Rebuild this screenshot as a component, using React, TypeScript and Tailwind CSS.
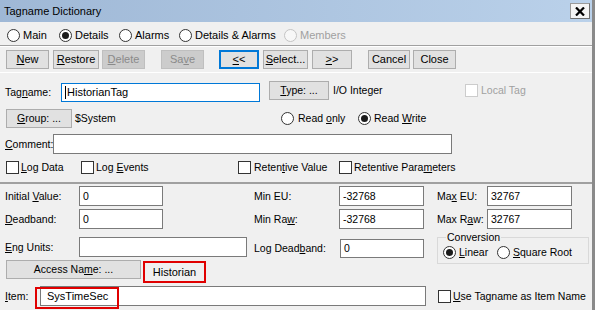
import React from 'react';

// Tagname Dictionary — classic Win32 dialog look

function U({ children }: { children: React.ReactNode }) {
  return <span className="underline underline-offset-[1px] decoration-1">{children}</span>;
}

function Btn({
  w,
  children,
  disabled,
  focused,
  h = 'h-[19px]',
}: {
  w: string;
  children: React.ReactNode;
  disabled?: boolean;
  focused?: boolean;
  h?: string;
}) {
  const look = disabled
    ? 'bg-[#cccccc] border border-[#bfbfbf] text-[#8a8a8a]'
    : focused
    ? 'bg-[#e1e1e1] border-2 border-[#0078d7]'
    : 'bg-[#e1e1e1] border border-[#adadad]';
  return (
    <div className={`${w} ${h} ${look} shrink-0 flex items-center justify-center`}>
      <span>{children}</span>
    </div>
  );
}

function Radio({ checked, disabled }: { checked?: boolean; disabled?: boolean }) {
  return (
    <span
      className={`w-[13px] h-[13px] rounded-full border shrink-0 flex items-center justify-center ${
        disabled ? 'border-[#c4c4c4] bg-[#f7f7f7]' : 'border-[#333333] bg-white'
      }`}
    >
      {checked && <span className="w-[7px] h-[7px] rounded-full bg-[#1b1b1b]" />}
    </span>
  );
}

function Check({ disabled }: { disabled?: boolean }) {
  return (
    <span
      className={`w-[13px] h-[13px] border shrink-0 bg-white ${disabled ? 'border-[#cccccc]' : 'border-[#333333]'}`}
    />
  );
}

function Field({ w, value, focused, h = 'h-[20px]', extra = '' }: { w: string; value?: string; focused?: boolean; h?: string; extra?: string }) {
  return (
    <div
      className={`${w} ${h} shrink-0 bg-white border ${
        focused ? 'border-[#0078d7]' : 'border-[#7a7a7a]'
      } flex items-center pl-[3px] ${extra}`}
    >
      {focused && <span className="w-px h-[13px] bg-black mr-px" />}
      <span>{value}</span>
    </div>
  );
}

export default function App() {
  return (
    <div className="w-[595px] h-[310px] overflow-hidden whitespace-nowrap bg-[#f0f0f0] border-r-[3px] border-[#8a8a8a] flex flex-col text-[10.5px] leading-none text-black font-['Liberation_Sans',Arial,sans-serif]">
      {/* title bar */}
      <div className="h-[22px] shrink-0 bg-linear-to-r from-[#9fb8d6] to-[#bad1ea] flex items-center justify-between pl-[4px] pr-[2px]">
        <span className="text-[11px]">Tagname Dictionary</span>
        <div className="w-[20px] h-[16px] bg-[#f4f4f4] border border-[#9a9a9a] border-r-[#6e6e6e] border-b-[#6e6e6e] flex items-center justify-center">
          <svg width="10" height="9" viewBox="0 0 10 9">
            <path d="M1 0.5 L9 8.5 M9 0.5 L1 8.5" stroke="#000" strokeWidth="2.2" />
          </svg>
        </div>
      </div>

      {/* view tabs */}
      <div className="h-[23px] shrink-0 flex items-center pt-[3px] pl-[7px] text-[11px]">
        <div className="w-[52px] flex items-center gap-[3px]"><Radio /><span>Main</span></div>
        <div className="w-[60px] flex items-center gap-[3px]"><Radio checked /><span>Details</span></div>
        <div className="w-[60px] flex items-center gap-[3px]"><Radio /><span>Alarms</span></div>
        <div className="w-[105px] flex items-center gap-[3px]"><Radio /><span>Details &amp; Alarms</span></div>
        <div className="flex items-center gap-[3px] text-[#a0a0a0]"><Radio disabled /><span>Members</span></div>
      </div>
      <div className="h-px shrink-0 bg-[#a0a0a0]" />
      <div className="h-px shrink-0 bg-white" />

      {/* toolbar */}
      <div className="h-[25px] shrink-0 flex items-start pt-[3px] pl-[6px] text-[11px]">
        <Btn w="w-[43px]"><U>N</U>ew</Btn>
        <div className="w-[4px]" />
        <Btn w="w-[46px]"><U>R</U>estore</Btn>
        <div className="w-[3px]" />
        <Btn w="w-[43px]" disabled><U>D</U>elete</Btn>
        <div className="w-[16px]" />
        <Btn w="w-[43px]" disabled>Sa<U>v</U>e</Btn>
        <div className="w-[15px]" />
        <Btn w="w-[40px]" focused><U>&lt;</U>&lt;</Btn>
        <div className="w-[4px]" />
        <Btn w="w-[45px]"><U>S</U>elect...</Btn>
        <div className="w-[4px]" />
        <Btn w="w-[40px]"><U>&gt;</U>&gt;</Btn>
        <div className="w-[16px]" />
        <Btn w="w-[42px]">Cancel</Btn>
        <div className="w-[3px]" />
        <Btn w="w-[43px]">Close</Btn>
      </div>
      <div className="h-px shrink-0 bg-white" />

      {/* general */}
      <div className="h-[8px] shrink-0" />
      <div className="h-[21px] shrink-0 flex items-start pl-[5px]">
        <span className="w-[56px] h-[21px] flex items-center pt-[2px]"><span>Tag<U>n</U>ame:</span></span>
        <Field w="w-[199px]" h="h-[19px]" extra="mt-[2px] text-[11px]" value="HistorianTag" focused />
        <div className="w-[9px]" />
        <Btn w="w-[60px]" h="h-[19px]"><U>T</U>ype: ...</Btn>
        <span className="w-[136px] h-[19px] flex items-center pl-[4px]">I/O Integer</span>
        <div className="h-[19px] flex items-center gap-[3px] text-[#a0a0a0]"><Check disabled /><span>Local Tag</span></div>
      </div>

      <div className="h-[6px] shrink-0" />
      <div className="h-[20px] shrink-0 flex items-center pl-[6px]">
        <Btn w="w-[66px]"><U>G</U>roup: ...</Btn>
        <span className="w-[209px] pl-[3px]">$System</span>
        <div className="w-[77px] flex items-center gap-[4px]"><Radio /><span>Read <U>o</U>nly</span></div>
        <div className="flex items-center gap-[3px]"><Radio checked /><span>Read <U>W</U>rite</span></div>
      </div>

      <div className="h-[6px] shrink-0" />
      <div className="h-[20px] shrink-0 flex items-center pl-[5px]">
        <span className="w-[48px]"><U>C</U>omment:</span>
        <Field w="w-[399px]" />
      </div>

      <div className="h-[7px] shrink-0" />
      <div className="h-[13px] shrink-0 flex items-center pl-[6px]">
        <div className="w-[75px] flex items-center gap-[2px]"><Check /><span><U>L</U>og Data</span></div>
        <div className="w-[157px] flex items-center gap-[2px]"><Check /><span>Log <U>E</U>vents</span></div>
        <div className="w-[101px] flex items-center gap-[3px]"><Check /><span>Reten<U>t</U>ive Value</span></div>
        <div className="flex items-center gap-[2px]"><Check /><span>Retentive Para<U>m</U>eters</span></div>
      </div>

      <div className="h-[8px] shrink-0" />
      <div className="h-[2px] shrink-0 bg-[#a0a0a0]" />

      {/* i/o details */}
      <div className="h-[2px] shrink-0" />
      <div className="h-[20px] shrink-0 flex items-center pl-[5px]">
        <span className="w-[74px]">Initial <U>V</U>alue:</span>
        <Field w="w-[84px]" value="0" />
        <div className="w-[91px]" />
        <span className="w-[85px]">Min EU:</span>
        <Field w="w-[85px]" value="-32768" extra="pl-[2px]" />
        <div className="w-[13px]" />
        <span className="w-[50px]">Ma<U>x</U> EU:</span>
        <Field w="w-[85px]" value="32767" />
      </div>

      <div className="h-[3px] shrink-0" />
      <div className="h-[20px] shrink-0 flex items-center pl-[5px]">
        <span className="w-[74px]"><U>D</U>eadband:</span>
        <Field w="w-[84px]" value="0" />
        <div className="w-[91px]" />
        <span className="w-[85px]">Min Ra<U>w</U>:</span>
        <Field w="w-[85px]" value="-32768" extra="pl-[2px]" />
        <div className="w-[13px]" />
        <span className="w-[50px]">Max R<U>a</U>w:</span>
        <Field w="w-[85px]" value="32767" />
      </div>

      <div className="h-[8px] shrink-0" />
      <div className="shrink-0 flex items-start">
        <div className="w-[424px] flex flex-col">
          <div className="h-[20px] flex items-center pl-[5px]">
            <span className="w-[74px]"><U>E</U>ng Units:</span>
            <Field w="w-[168px]" />
            <div className="w-[7px]" />
            <span className="w-[86px] pt-[2px]">Log Dead<U>b</U>and:</span>
            <Field w="w-[84px]" h="h-[19px]" extra="mt-[2px]" value="0" />
          </div>
          <div className="h-[3px]" />
          <div className="h-[22px] flex items-start pl-[6px]">
            <Btn w="w-[135px]">Access Na<U>m</U>e: ...</Btn>
            <div className="w-[2px]" />
            <div className="w-[63px] h-[22px] mt-[1px] border-2 border-[#e00000] flex items-center justify-center text-[11px]">Historian</div>
          </div>
        </div>
        <fieldset className="ml-[13px] mt-[-6px] w-[152px] h-[33px] border border-[#d9d9d9] pl-[5px]">
          <legend className="ml-[3px] px-[1px] leading-[12px]">Conversion</legend>
          <div className="flex items-center mt-[3px]">
            <div className="w-[54px] flex items-center gap-[3px]"><Radio checked /><span><U>L</U>inear</span></div>
            <div className="flex items-center gap-[3px]"><Radio /><span><U>S</U>quare Root</span></div>
          </div>
        </fieldset>
      </div>

      <div className="h-[4px] shrink-0" />
      <div className="relative h-[20px] shrink-0 flex items-center pl-[5px]">
        <span className="w-[35px]"><U>I</U>tem:</span>
        <Field w="w-[386px]" value="SysTimeSec" extra="pl-[6px] text-[11px]" />
        <div className="w-[12px]" />
        <div className="flex items-center gap-[2px]"><Check /><span><U>U</U>se Tagname as Item Name</span></div>
        <div className="absolute left-[35px] top-[1px] w-[84px] h-[22px] border-2 border-[#e00000]" />
      </div>
    </div>
  );
}
